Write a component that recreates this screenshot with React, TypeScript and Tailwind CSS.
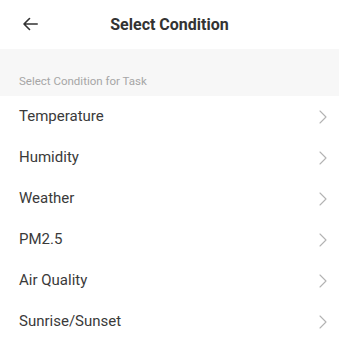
import { ChevronRight } from 'lucide-react';

const conditions = ['Temperature', 'Humidity', 'Weather', 'PM2.5', 'Air Quality', 'Sunrise/Sunset'];

const App = () => {
  return (
    <div className="w-[339px] h-[345px] bg-white overflow-hidden font-['Roboto',sans-serif]">
      <div className="relative h-[49px] flex items-center justify-center">
        <svg className="absolute left-[23px] top-[17px]" width="15" height="14" viewBox="0 0 15 14" fill="none" stroke="#333" strokeWidth="1.6" strokeLinecap="round" strokeLinejoin="round">
          <path d="M14.2 7H1M6.5 1.5 1 7l5.5 5.5" />
        </svg>
        <h1 className="text-[16px] font-bold text-[#333]">Select Condition</h1>
      </div>
      <div className="h-[47px] bg-[#f7f7f7] flex items-end pl-[19px] pb-[8px]">
        <span className="text-[11.5px] text-[#a6a6a6] leading-[14px]">Select Condition for Task</span>
      </div>
      <ul>
        {conditions.map((c) => (
          <li key={c} className="h-[41px] flex items-center justify-between pl-[19px] pr-[4px]">
            <span className="text-[15px] text-[#3a3a3a]">{c}</span>
            <ChevronRight size={24} strokeWidth={1.1} color="#b3b3b3" />
          </li>
        ))}
      </ul>
    </div>
  );
};

export default App;
